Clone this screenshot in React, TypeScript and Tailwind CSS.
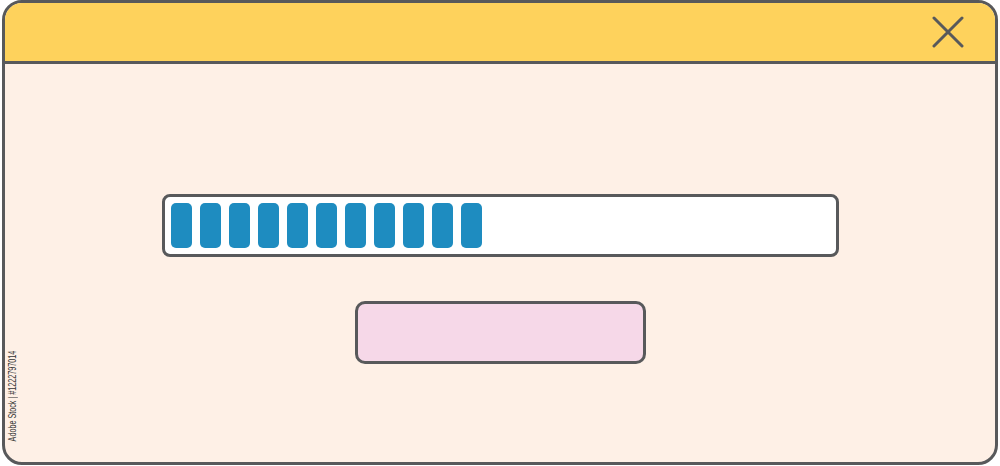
const SEGMENTS = 11

function CloseIcon() {
  return (
    <svg viewBox="0 0 32 32" className="h-[32px] w-[32px]" fill="none" stroke="#58595b" strokeWidth="3" strokeLinecap="round">
      <path d="M2 2L30 30M30 2L2 30" />
    </svg>
  )
}

export default function App() {
  return (
    <div className="h-[466px] w-[1000px] bg-white pl-[2px]">
      <div className="relative flex h-[465px] w-[996px] flex-col overflow-hidden rounded-[20px] border-[3px] border-[#58595b] bg-[#fef0e6]">
        {/* Title bar */}
        <div className="flex h-[61px] shrink-0 items-center justify-end border-b-[3px] border-[#58595b] bg-[#fed25c] pr-[31px]">
          <CloseIcon />
        </div>

        {/* Body */}
        <div className="flex flex-col items-center pt-[130px]">
          <div className="flex h-[63px] w-[677px] items-center gap-[8px] rounded-[8px] border-[3px] border-[#58595b] bg-white px-[6px]">
            {Array.from({ length: SEGMENTS }).map((_, i) => (
              <div key={i} className="h-[45px] w-[21px] rounded-[5px] bg-[#1e8cc0]" />
            ))}
          </div>
          <div className="mt-[44px] h-[63px] w-[291px] rounded-[10px] border-[3px] border-[#58595b] bg-[#f6d8e8]" />
        </div>

        <span className="absolute bottom-[3px] left-[3px] rotate-180 scale-y-[0.72] font-['Liberation_Sans',sans-serif] text-[10px] leading-none text-[#333333] [writing-mode:vertical-rl]">
          Adobe Stock | #1222797014
        </span>
      </div>
    </div>
  )
}
